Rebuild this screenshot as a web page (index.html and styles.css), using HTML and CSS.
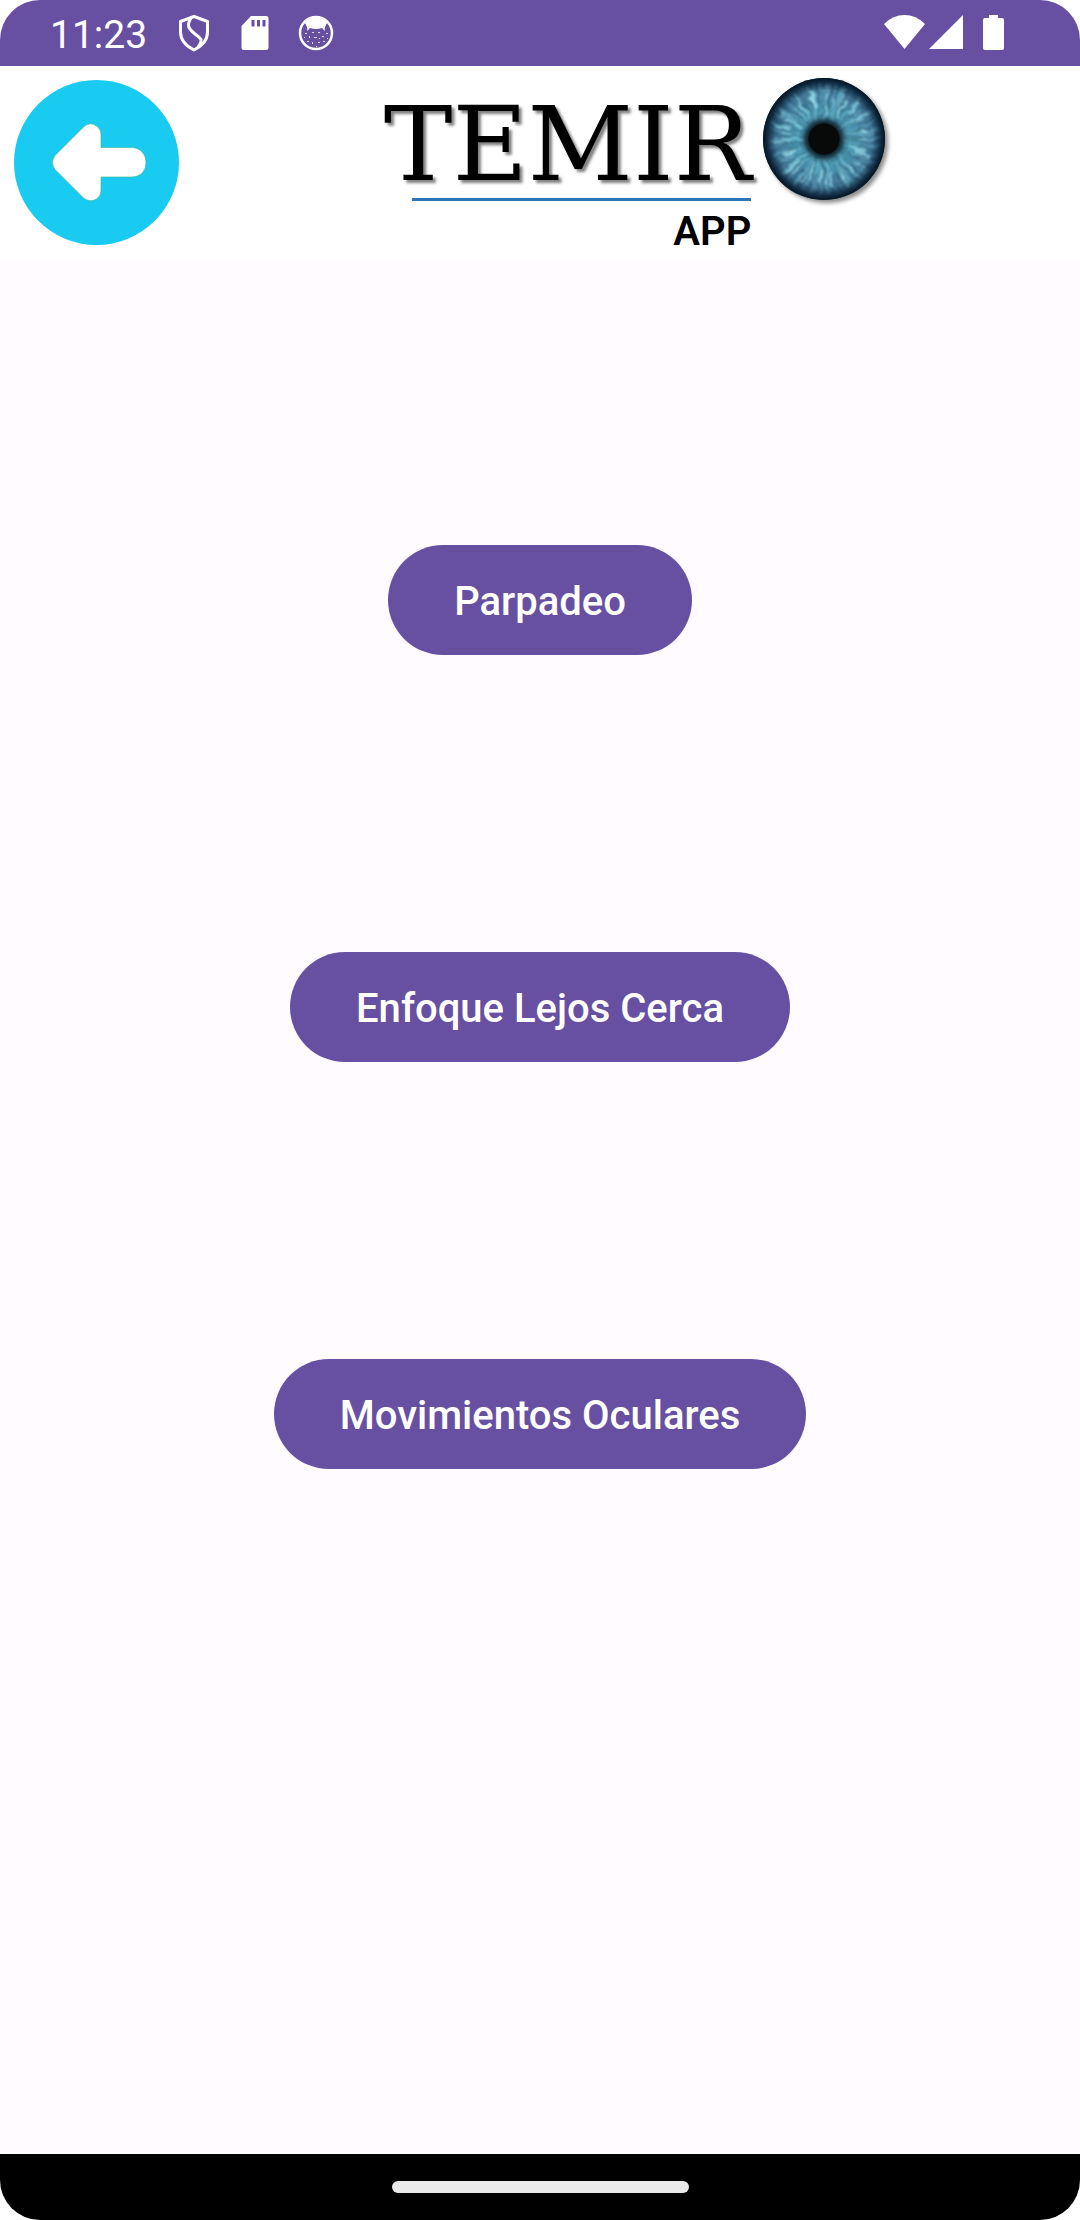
FILE: index.html
```html
<!DOCTYPE html>
<html lang="es">
<head>
<meta charset="utf-8">
<meta name="viewport" content="width=device-width, initial-scale=1">
<title>Temiro App</title>
<link rel="stylesheet" href="styles.css">
</head>
<body>
<div class="screen">
  <div class="status">
    <time class="clock">11:23</time>
    <div class="notices">
      <svg class="icon" viewBox="0 0 36 38" aria-hidden="true"><g fill="none" stroke="#fff" stroke-width="3" stroke-linejoin="round"><path d="M18 2.500L31.500 7.500V18C31.500 26 26 32 18 36C10 32 4.500 26 4.500 18V7.500Z"/><path d="M15 4C10 12 13 15 19 20C26 25 27 26 22 33" stroke-width="3"/></g></svg>
      <svg class="icon" viewBox="0 0 36 38" aria-hidden="true"><path fill="#fff" fill-rule="evenodd" d="M14 2H29Q31.500 2 31.500 4.500V34Q31.500 36 29 36H7Q4.500 36 4.500 34V12ZM14.500 6V12.500H17.500V6ZM20 6V12.500H23V6ZM25.500 6V12.500H28.500V6Z"/></svg>
      <svg class="icon" viewBox="0 0 36 38" aria-hidden="true"><circle cx="18" cy="19" r="16" fill="none" stroke="#fff" stroke-width="2.500"/><path fill="#fff" d="M7 9Q11 3.500 18 3Q25 3.500 29 9L27 13L26.500 17L24 14Q18 16 12 14L9.500 17L9 13Z"/><g fill="#fff" opacity=".8"><path d="M7 19h2v1h-2zM11 22h1v2h-1zM14 18h2v1h-2zM20 18h2v1h-2zM28 19h2v1h-2zM24 22h2v1h-2zM16 23h3v1h-3zM9 27h2v1h-2zM14 28h1v2h-1zM20 28h2v1h-2zM25 27h2v1h-2zM18 32h1v1h-1zM21 24h1v1h-1zM6 23h1v1h-1zM29 24h1v1h-1z"/></g></svg>
    </div>
    <svg class="signals" viewBox="0 0 120 38" aria-hidden="true"><g fill="#fff"><path d="M0 10Q9 1 20.500 1Q32 1 41 10L20.500 35Z"/><path d="M79 1V35H45Z"/><path d="M105 1H114V4H118Q120 4 120 6V34Q120 36 118 36H101Q99 36 99 34V6Q99 4 101 4H105Z"/></g></svg>
  </div>

  <header class="header">
    <button class="back" type="button" aria-label="Volver">
      <svg viewBox="0 0 165 165" aria-hidden="true"><circle cx="82.500" cy="82.500" r="82.500" fill="#19caf1"/><path fill="#fff" stroke="#42bd9a" stroke-width=".7" d="M41 75.500L69.500 47Q76 41 82.500 46Q87 49 87 55V67.500H117Q125 67.500 129 73Q132 77 132 82.500Q132 88 129 92Q125 97 117 97H87V110Q87 116 82.500 119Q76 123 69.500 118L41 89.500Q36 82.500 41 75.500Z"/></svg>
    </button>
    <div class="brand">
      <div class="words">
        <span class="name">TEMIR</span>
        <span class="app">APP</span>
      </div>
      <svg class="eye" viewBox="0 0 126 126" role="img" aria-label="O">
        <defs>
          <radialGradient id="base"><stop offset=".25" stop-color="#203f50"/><stop offset=".42" stop-color="#4591ac"/><stop offset=".7" stop-color="#43809f"/><stop offset="1" stop-color="#1d3f5c"/></radialGradient>
          <radialGradient id="rim"><stop offset=".23" stop-color="#0b171d"/><stop offset=".36" stop-color="#12313d" stop-opacity="0"/><stop offset=".8" stop-color="#102c44" stop-opacity="0"/><stop offset=".93" stop-color="#0b2237" stop-opacity=".8"/><stop offset="1" stop-color="#06141f"/></radialGradient>
          <filter id="fibre" x="-10%" y="-10%" width="120%" height="120%"><feTurbulence type="fractalNoise" baseFrequency=".08" numOctaves="2" seed="4"/><feDisplacementMap in="SourceGraphic" scale="8" xChannelSelector="R" yChannelSelector="G"/><feGaussianBlur stdDeviation=".9"/></filter>
        </defs>
        <circle cx="61" cy="61" r="61" fill="url(#base)"/>
        <g fill="none" filter="url(#fibre)">
          <circle cx="61" cy="61" r="38" stroke="#7ccbe0" stroke-width="36" stroke-dasharray="1 4 2 5 1 3 3 6" opacity=".55"/>
          <circle cx="61" cy="61" r="48" stroke="#263f63" stroke-width="22" stroke-dasharray="2 5 1 7 2 4" opacity=".5"/>
          <circle cx="61" cy="61" r="34" stroke="#a5edf5" stroke-width="20" stroke-dasharray="1 8 2 11 1 5" opacity=".7"/>
          <circle cx="61" cy="61" r="28" stroke="#1b4458" stroke-width="22" stroke-dasharray="1 4 1 7" opacity=".6"/>
          <circle cx="61" cy="61" r="42" stroke="#9be4ef" stroke-width="16" stroke-dasharray="1 13 2 9 1 17" opacity=".8"/>
          <circle cx="61" cy="61" r="50" stroke="#6aa5c6" stroke-width="14" stroke-dasharray="1 5 1 8" opacity=".6"/>
        </g>
        <circle cx="61" cy="61" r="61" fill="url(#rim)"/>
        <circle cx="61" cy="61" r="15.500" fill="#080909"/>
      </svg>
    </div>
  </header>

  <main class="menu">
    <button class="choice" type="button">Parpadeo</button>
    <button class="choice" type="button">Enfoque Lejos Cerca</button>
    <button class="choice" type="button">Movimientos Oculares</button>
  </main>

  <div class="navbar"><span class="handle"></span></div>
</div>
</body>
</html>
```
FILE: styles.css
```css
* {
  box-sizing: border-box;
}

body {
  margin: 0;
  background: #fff;
  font-family: Roboto, "Liberation Sans", sans-serif;
}

.screen {
  display: flex;
  flex-direction: column;
  min-height: 100vh;
  overflow: hidden;
  border-radius: 40px;
  background: #fffbff;
}

.status {
  display: flex;
  align-items: center;
  height: 66px;
  padding: 0 76px 0 50px;
  background: #6750a2;
  color: #fff;
}

.clock {
  padding-top: 3px;
  font-size: 39px;
  line-height: 46px;
}

.notices {
  display: flex;
  gap: 25px;
  margin-left: 29px;
}

.icon {
  width: 36px;
  height: 38px;
}

.signals {
  width: 120px;
  height: 38px;
  margin-left: auto;
}

.header {
  display: flex;
  align-items: flex-end;
  gap: 14px;
  padding: 12px 0 14px 14px;
  background: #fff;
}

.back {
  width: 165px;
  height: 165px;
  padding: 0;
  border: 0;
  border-radius: 50%;
  background: none;
}

.back svg {
  display: block;
}

.brand {
  display: flex;
  flex: 1;
  justify-content: center;
  align-items: flex-start;
  gap: 12px;
  height: 167px;
}

.words {
  display: flex;
  flex-direction: column;
  align-items: flex-end;
  padding-top: 12px;
  color: #000;
}

.name {
  font-family: "DejaVu Serif", serif;
  font-size: 103px;
  line-height: 108px;
  text-shadow: 3px 3px 3px rgba(0, 0, 0, .5);
}

.app {
  align-self: stretch;
  margin-left: 28px;
  border-top: 3px solid #2e75b6;
  padding-top: 8px;
  font-size: 40px;
  font-weight: 600;
  line-height: 46px;
  text-align: right;
}

.eye {
  width: 126px;
  height: 126px;
  filter: drop-shadow(3px 3px 2px rgba(0, 0, 0, .45));
}

.menu {
  display: flex;
  flex: 1;
  flex-direction: column;
  align-items: center;
  gap: 297px;
  padding: 286px 0 0;
}

.choice {
  height: 110px;
  padding: 3px 66px 0;
  border: 0;
  border-radius: 55px;
  background: #6750a2;
  color: #fff;
  font-family: inherit;
  font-size: 40px;
  font-weight: 500;
  line-height: 46px;
}

.navbar {
  display: flex;
  justify-content: center;
  align-items: center;
  height: 66px;
  background: #000;
}

.handle {
  width: 297px;
  height: 12px;
  border-radius: 6px;
  background: #eaeaea;
}
```
